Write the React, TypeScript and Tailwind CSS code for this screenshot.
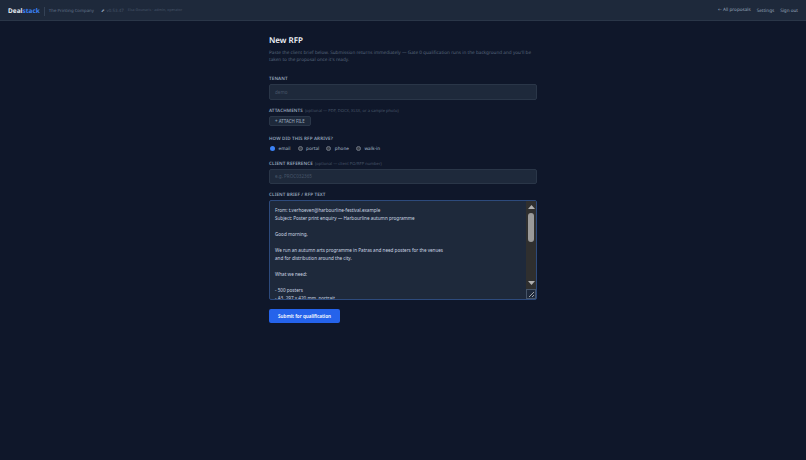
import { useState } from "react";

const BRIEF = `From: t.verhoeven@harbourline-festival.example
Subject: Poster print enquiry — Harbourline autumn programme

Good morning,

We run an autumn arts programme in Patras and need posters for the venues
and for distribution around the city.

What we need:

- 500 posters
- A3, 297 x 420 mm, portrait
- Full colour, one side
- 170 gsm silk paper

Delivery to our office by the end of the month.
Could you send a quotation?

Kind regards,
T. Verhoeven`;

const CHANNELS = ["email", "portal", "phone", "walk-in"];

function FieldLabel({ text, hint }: { text: string; hint?: string }) {
  return (
    <div className="text-[4.6px] leading-[8px] font-semibold tracking-[0.1px] text-[#94a3b8]">
      {text}
      {hint && <span className="ml-[2px] text-[4.1px] leading-none font-normal tracking-normal text-[#475569]">{hint}</span>}
    </div>
  );
}

function FakeScrollbar() {
  return (
    <div className="pointer-events-none absolute right-px top-px flex h-[98px] w-[10px] flex-col">
      <div className="flex h-[88px] flex-col items-center bg-[#2f2f2f] pt-[4px]">
        <svg width="7" height="4" viewBox="0 0 7 4">
          <path d="M3.5 0L7 4H0z" fill="#b0b0b0" />
        </svg>
        <div className="mt-[4px] h-[29px] w-[6px] rounded-[3px] bg-[#9a9a9a]" />
        <svg className="mt-auto mb-[4px]" width="7" height="4" viewBox="0 0 7 4">
          <path d="M0 0H7L3.5 4z" fill="#b0b0b0" />
        </svg>
      </div>
      <div className="flex h-[10px] items-end justify-end border border-[#475569] bg-[#1e293b]">
        <svg width="7" height="7" viewBox="0 0 7 7">
          <path d="M1 6L6 1M4 6L6 4" stroke="#c4c4c4" strokeWidth="0.8" fill="none" />
        </svg>
      </div>
    </div>
  );
}

export default function App() {
  const [channel, setChannel] = useState("email");

  return (
    <div className="min-h-[460px] bg-[#0f172a] font-['Noto_Sans',sans-serif] text-[#e2e8f0] [text-rendering:geometricPrecision]">
      <header className="flex h-[21px] items-center justify-between border-b border-[#2a3648] bg-[#1e293b] pl-2 pr-2 pt-[2px]">
        <div className="flex items-center text-[4.4px] text-[#475569]">
          <span className="text-[6.5px] font-bold text-[#e2e8f0]">
            Deal<span className="text-[#3b82f6]">stack</span>
          </span>
          <span className="ml-[4px] h-[9px] w-px bg-[#334155]" />
          <span className="ml-[4px] text-[4.3px] text-[#64748b]">The Printing Company</span>
          <span className="ml-[7px] text-[#94a3b8]">⬈</span>
          <span className="ml-[2px]">v0.53.47</span>
          <span className="ml-[4px] text-[3.7px]">Elsa Gounaris · admin, operator</span>
        </div>
        <nav className="flex items-center gap-[6px] text-[4.6px] text-[#94a3b8]">
          <span>
            <span className="font-['DejaVu_Sans',sans-serif]">←</span> All proposals
          </span>
          <span>Settings</span>
          <span>Sign out</span>
        </nav>
      </header>

      <main className="mx-auto w-[268px] pt-[15px]">
        <h1 className="text-[8px] leading-[10px] font-semibold text-[#f1f5f9]">New RFP</h1>
        <p className="mt-[4px] text-[4.65px] leading-[7px] text-[#56657a]">
          Paste the client brief below. Submission returns immediately — Gate 0 qualification runs in the
          background and you'll be taken to the proposal once it's ready.
        </p>

        <div className="mt-[11px]">
          <FieldLabel text="TENANT" />
          <input
            defaultValue="demo"
            className="mt-[1px] block h-[16px] w-full rounded-[2px] border border-[#2a3648] bg-[#1e293b] px-[5px] text-[4.6px] text-[#475569] outline-none"
          />
        </div>

        <div className="mt-[7px]">
          <FieldLabel text="ATTACHMENTS" hint="(optional — PDF, DOCX, XLSX, or a sample photo)" />
          <button className="mt-[1px] flex h-[10px] items-center rounded-[2px] border border-[#2a3648] bg-[#1e293b] px-[5px] text-[4.4px] font-medium text-[#94a3b8]">
            + ATTACH FILE
          </button>
        </div>

        <div className="mt-[8.5px]">
          <FieldLabel text="HOW DID THIS RFP ARRIVE?" />
          <div className="mt-[1px] flex h-[10px] items-center">
            {CHANNELS.map((c) => (
              <label key={c} className="mr-[6px] flex items-center text-[4.6px] font-medium text-[#94a3b8]">
                <span
                  onClick={() => setChannel(c)}
                  className={
                    channel === c
                      ? "ml-[1px] mr-[3.5px] size-[5px] rounded-full bg-[#3b82f6]"
                      : "ml-[1px] mr-[3.5px] size-[5px] rounded-full border border-[#6b7280] bg-[#3a3f47]"
                  }
                />
                <span className="pt-[1px]">{c}</span>
              </label>
            ))}
          </div>
        </div>

        <div className="mt-[6px]">
          <FieldLabel text="CLIENT REFERENCE" hint="(optional — client PO/RFP number)" />
          <input
            placeholder="e.g. PROC032365"
            className="mt-[1px] block h-[15px] w-full rounded-[2px] border border-[#2a3648] bg-[#1e293b] px-[5px] text-[4.6px] text-[#e2e8f0] outline-none placeholder:text-[#475569]"
          />
        </div>

        <div className="mt-[7px]">
          <FieldLabel text="CLIENT BRIEF / RFP TEXT" />
          <div className="relative mt-[1.5px]">
            <textarea
              defaultValue={BRIEF}
              className="block h-[100px] w-full resize-none overflow-hidden rounded-[2px] border border-[#2d4a7c] bg-[#1e293b] px-[5px] pt-[5px] text-[4.6px] leading-[8px] text-[#cbd5e1] outline-none"
            />
            <FakeScrollbar />
          </div>
        </div>

        <button className="mt-[9px] flex h-[14px] w-[71px] items-center justify-center rounded-[2px] bg-[#2563eb] text-[4.6px] font-semibold text-white">
          Submit for qualification
        </button>
      </main>
    </div>
  );
}
